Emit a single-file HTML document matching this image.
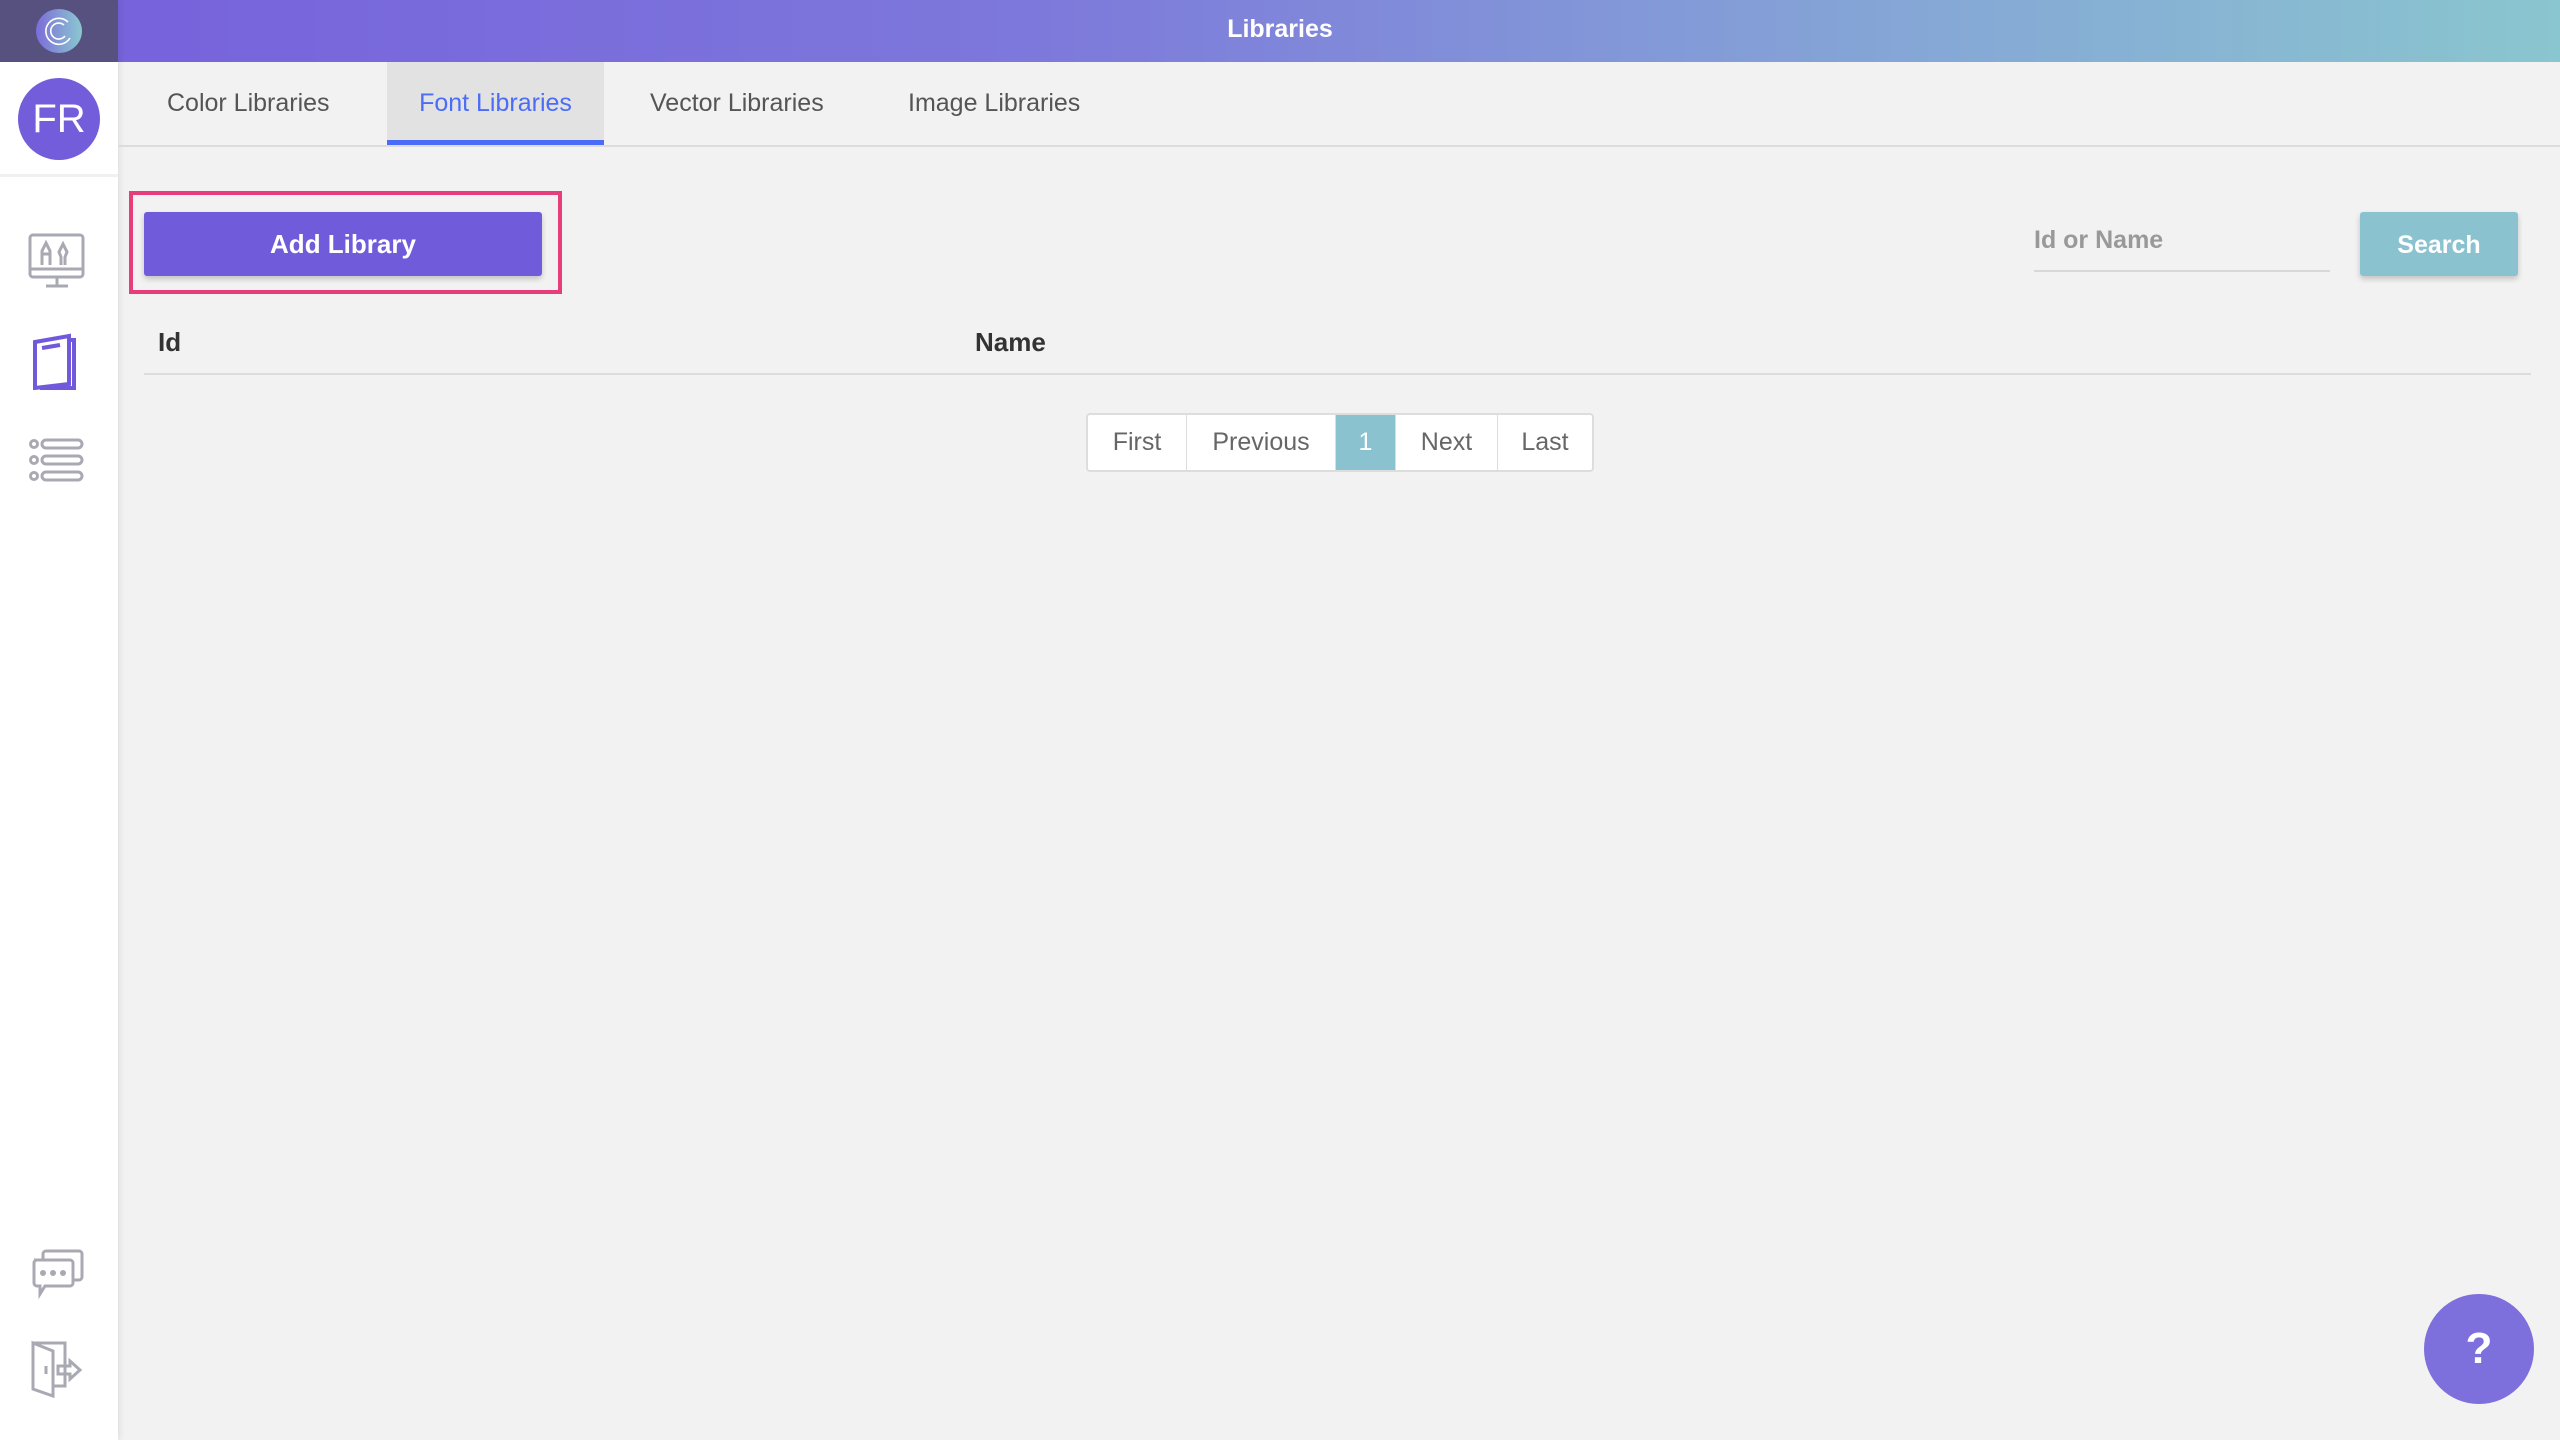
<!DOCTYPE html>
<html><head><meta charset="utf-8"><style>
*{margin:0;padding:0;box-sizing:border-box}
body{width:2560px;height:1440px;overflow:hidden;background:#f2f2f2;font-family:"Liberation Sans",sans-serif;position:relative}
.hdr{position:absolute;left:0;top:0;width:2560px;height:62px;background:linear-gradient(90deg,#7660dc 0%,#7d78db 40%,#85a7d6 75%,#8ac6cf 100%);color:#fff;font-weight:bold;font-size:25px;text-align:center;line-height:58px}
.side{position:absolute;left:0;top:0;width:118px;height:1440px;background:#fff;box-shadow:2px 0 6px rgba(0,0,0,.08)}
.logo{position:absolute;left:0;top:0;width:118px;height:62px;background:#57517f}
.av{position:absolute;left:18px;top:78px;width:82px;height:82px;border-radius:50%;background:#735ddb;color:#fff;font-size:40px;line-height:82px;text-align:center}
.tabs{position:absolute;left:118px;top:62px;right:0;height:85px;border-bottom:2px solid #dcdcdc}
.tab{position:absolute;top:0;height:83px;line-height:82px;font-size:25px;color:#555}
.act{background:#e2e2e2;color:#4a6cf7;border-bottom:5px solid #4a6cf7;text-align:center}
.red{position:absolute;left:129px;top:191px;width:433px;height:103px;border:4px solid #e63e7b}
.add{position:absolute;left:144px;top:212px;width:398px;height:64px;background:#705bdb;border-radius:3px;color:#fff;font-weight:bold;font-size:26px;text-align:center;line-height:64px;box-shadow:0 3px 6px rgba(0,0,0,.2)}
.inp{position:absolute;left:2034px;top:220px;width:296px;height:52px;border-bottom:2px solid #d8d8d8;color:#999;font-weight:bold;font-size:25px;line-height:40px}
.srch{position:absolute;left:2360px;top:212px;width:158px;height:64px;background:#8ac3cf;border-radius:3px;color:#fff;font-weight:bold;font-size:25px;text-align:center;line-height:66px;box-shadow:0 3px 6px rgba(0,0,0,.2)}
.th{position:absolute;top:327px;font-weight:bold;font-size:26px;color:#333}
.line{position:absolute;left:144px;top:373px;width:2387px;height:2px;background:#dcdcdc}
.pg{position:absolute;top:413px;height:59px;display:flex;left:1086px;border:2px solid #ddd;border-radius:4px;background:#fff;overflow:hidden}
.pg div{height:55px;line-height:55px;font-size:25px;color:#666;text-align:center;border-right:1px solid #ddd}
.help{position:absolute;left:2424px;top:1294px;width:110px;height:110px;border-radius:50%;background:#7d70dc;color:#fff;font-weight:bold;font-size:44px;text-align:center;line-height:110px}
svg{position:absolute}
</style></head><body>
<div class="hdr">Libraries</div>
<div class="side"></div>
<div class="logo"><svg width="118" height="62"><defs><linearGradient id="g" x1="0" x2="1"><stop offset="0" stop-color="#7c6cd9"/><stop offset="1" stop-color="#8bc8d0"/></linearGradient></defs><ellipse cx="59" cy="31" rx="23" ry="22" fill="url(#g)"/><path d="M68 22a13 13 0 1 0 2 16M64 25a8 8 0 1 0 1 11" fill="none" stroke="#fff" stroke-width="1.6"/></svg></div>
<div class="av">FR</div>
<svg style="left:0;top:174px" width="118" height="3"><rect width="118" height="3" fill="#f0f0f0"/></svg>
<svg style="left:28px;top:232px" width="58" height="60" fill="none" stroke="#a9a9b3" stroke-width="3"><rect x="2" y="3" width="53" height="42" rx="3"/><path d="M2 37h53M29 45v8M18 54h22"/><path d="M14 33v-14l4-8 4 8v14M14 22h8M33 33v-8l-2-5 4-8 4 8-2 5v8"/></svg>
<svg style="left:32px;top:332px" width="50" height="58" fill="none" stroke="#7159dc" stroke-width="4"><path d="M3 10l34-6v48l-34 4z"/><path d="M37 8h5v48H8"/><path d="M10 16l18-3"/></svg>
<svg style="left:28px;top:438px" width="58" height="46" fill="none" stroke="#a9a9b3" stroke-width="3"><circle cx="6" cy="6" r="3.5"/><circle cx="6" cy="22" r="3.5"/><circle cx="6" cy="38" r="3.5"/><rect x="14" y="2" width="40" height="8" rx="4"/><rect x="14" y="18" width="40" height="8" rx="4"/><rect x="14" y="34" width="40" height="8" rx="4"/></svg>
<svg style="left:30px;top:1248px" width="56" height="56" fill="none" stroke="#a9a9b3" stroke-width="3"><path d="M13 12V6a3 3 0 0 1 3-3h33a3 3 0 0 1 3 3v23a3 3 0 0 1-3 3h-5"/><path d="M4 12h36a3 3 0 0 1 3 3v20a3 3 0 0 1-3 3H15l-5 8v-8H7a3 3 0 0 1-3-3V15a3 3 0 0 1 3-3z"/><circle cx="13" cy="25" r="1.5" fill="#a9a9b3"/><circle cx="23" cy="25" r="1.5" fill="#a9a9b3"/><circle cx="33" cy="25" r="1.5" fill="#a9a9b3"/></svg>
<svg style="left:30px;top:1340px" width="56" height="58" fill="none" stroke="#a9a9b3" stroke-width="3"><path d="M3 3h32v43H23"/><path d="M3 3l20 8v45L3 49z"/><path d="M16 26v8"/><path d="M28 26h12v-5l10 9-10 9v-5H28z"/></svg>
<div class="tabs">
<div class="tab" style="left:49px">Color Libraries</div>
<div class="tab act" style="left:269px;width:217px">Font Libraries</div>
<div class="tab" style="left:532px">Vector Libraries</div>
<div class="tab" style="left:790px">Image Libraries</div>
</div>
<div class="red"></div>
<div class="add">Add Library</div>
<div class="inp">Id or Name</div>
<div class="srch">Search</div>
<div class="th" style="left:158px">Id</div>
<div class="th" style="left:975px">Name</div>
<div class="line"></div>
<div class="pg">
<div style="width:99px">First</div>
<div style="width:149px">Previous</div>
<div style="width:60px;background:#8ac3cf;color:#fff">1</div>
<div style="width:102px">Next</div>
<div style="width:94px;border-right:none">Last</div>
</div>
<div class="help">?</div>
</body></html>
